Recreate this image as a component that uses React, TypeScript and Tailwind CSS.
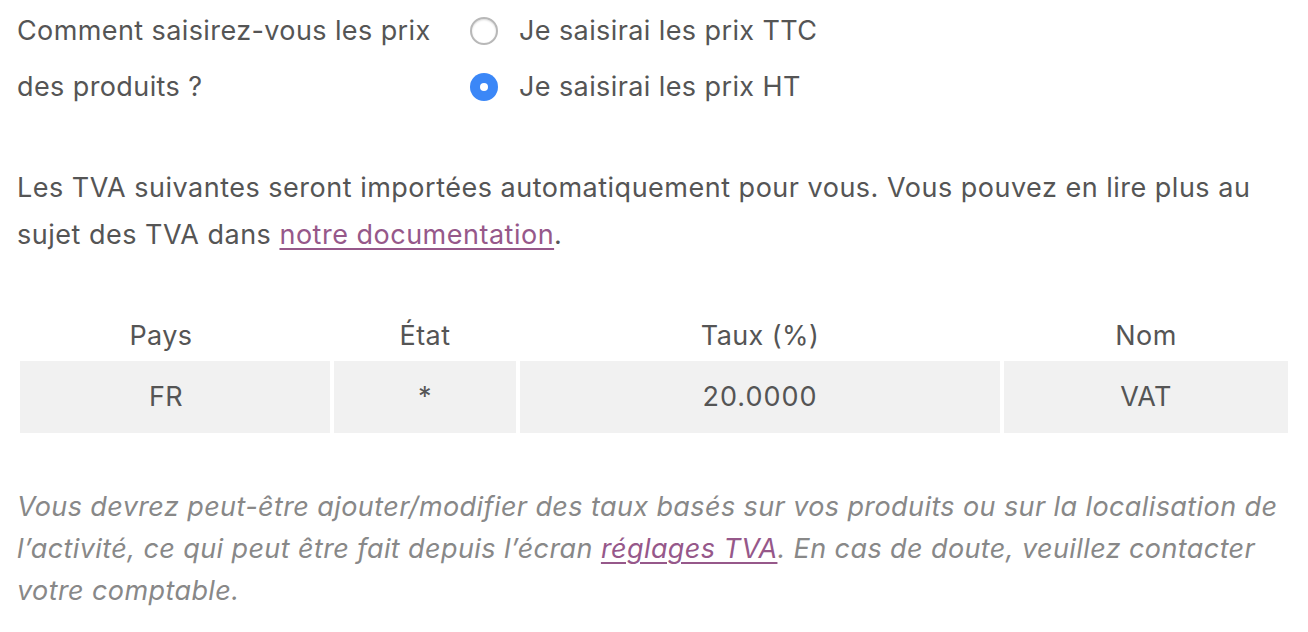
const rates = [{ country: "FR", state: "*", rate: "20.0000", name: "VAT" }];

function Radio({ checked }: { checked?: boolean }) {
  return checked ? (
    <span className="flex h-[28px] w-[28px] items-center justify-center rounded-full bg-[#3b87f7]">
      <span className="h-[8px] w-[8px] rounded-full bg-white" />
    </span>
  ) : (
    <span className="block h-[28px] w-[28px] rounded-full border-2 border-[#b8b8b8] bg-white shadow-[inset_0_1px_2px_rgba(0,0,0,0.15)]" />
  );
}

export default function App() {
  return (
    <div className="min-h-[632px] bg-white pl-[17px] pr-[16px] pt-0 font-['Inter','Liberation_Sans',sans-serif] text-[27px] tracking-[0.4px] text-[#555]">
      <div className="flex">
        <div className="w-[453px] leading-[56px] pt-[3px]">
          Comment saisirez-vous les prix
          <br />
          des produits ?
        </div>
        <div className="flex flex-col pt-[3px]">
          <label className="flex h-[56px] items-center gap-[21px]">
            <Radio />
            <span>Je saisirai les prix TTC</span>
          </label>
          <label className="flex h-[56px] items-center gap-[21px]">
            <Radio checked />
            <span>Je saisirai les prix HT</span>
          </label>
        </div>
      </div>

      <p className="mt-[49px] leading-[47px] tracking-[0.5px]">
        Les TVA suivantes seront importées automatiquement pour vous. Vous pouvez en lire plus au
        <br />
        sujet des TVA dans{" "}
        <a className="text-[#96588a] underline underline-offset-[4px]">notre documentation</a>.
      </p>

      <div className="mt-[53px] ml-[3px] grid grid-cols-[310px_182px_480px_284px] gap-x-[4px] text-center">
        <div className="flex h-[50px] items-center justify-center pr-[28px]">Pays</div>
        <div className="flex h-[50px] items-center justify-center">État</div>
        <div className="flex h-[50px] items-center justify-center">Taux (%)</div>
        <div className="flex h-[50px] items-center justify-center">Nom</div>
        {rates.map((r) => (
          <div key={r.country} className="contents">
            <div className="flex h-[72px] items-center justify-center bg-[#f1f1f1] pr-[18px]">{r.country}</div>
            <div className="flex h-[72px] items-center justify-center bg-[#f1f1f1]">{r.state}</div>
            <div className="flex h-[72px] items-center justify-center bg-[#f1f1f1] tracking-[1px]">{r.rate}</div>
            <div className="flex h-[72px] items-center justify-center bg-[#f1f1f1]">{r.name}</div>
          </div>
        ))}
      </div>

      <p className="mt-[53px] italic leading-[42px] text-[#888]">
        Vous devrez peut-être ajouter/modifier des taux basés sur vos produits ou sur la localisation de
        <br />
        l’activité, ce qui peut être fait depuis l’écran{" "}
        <a className="text-[#96588a] underline underline-offset-[4px]">réglages TVA</a>. En cas de doute, veuillez contacter
        <br />
        votre comptable.
      </p>
    </div>
  );
}
